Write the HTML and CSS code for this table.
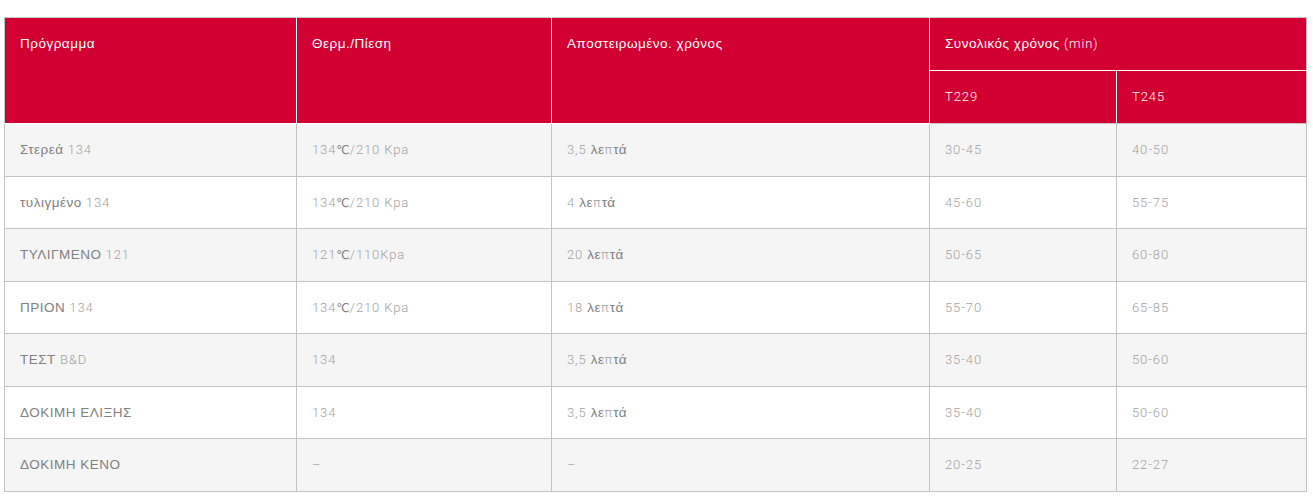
FILE: index.html
```html
<!DOCTYPE html>
<html lang="el">
<head>
<meta charset="utf-8">
<title>Προγράμματα</title>
<link rel="stylesheet" href="styles.css">
</head>
<body>
<div class="wrap">
<table class="prog">
  <colgroup>
    <col class="c1"><col class="c2"><col class="c3"><col class="c4"><col class="c5">
  </colgroup>
  <thead>
    <tr>
      <th rowspan="2" class="first"><span class="gr">Πρόγραμμα</span></th>
      <th rowspan="2"><span class="gr">Θερμ./Πίεση</span></th>
      <th rowspan="2"><span class="gr">Αποστειρωμένο. χρόνος</span></th>
      <th colspan="2" class="last"><span class="gr">Συνολικός χρόνος</span> (min)</th>
    </tr>
    <tr>
      <th>T229</th>
      <th class="last">T245</th>
    </tr>
  </thead>
  <tbody>
    <tr class="alt">
      <td><span class="gr">Στερεά</span> 134</td>
      <td>134<span class="deg">℃</span>/210 Kpa</td>
      <td>3,5 <span class="gr">λε</span>π<span class="gr">τά</span></td>
      <td>30-45</td>
      <td>40-50</td>
    </tr>
    <tr>
      <td><span class="gr">τυλιγμένο</span> 134</td>
      <td>134<span class="deg">℃</span>/210 Kpa</td>
      <td>4 <span class="gr">λε</span>π<span class="gr">τά</span></td>
      <td>45-60</td>
      <td>55-75</td>
    </tr>
    <tr class="alt">
      <td><span class="gr">ΤΥΛΙΓΜΕΝΟ</span> 121</td>
      <td>121<span class="deg">℃</span>/110Kpa</td>
      <td>20 <span class="gr">λε</span>π<span class="gr">τά</span></td>
      <td>50-65</td>
      <td>60-80</td>
    </tr>
    <tr>
      <td><span class="gr">ΠΡΙΟΝ</span> 134</td>
      <td>134<span class="deg">℃</span>/210 Kpa</td>
      <td>18 <span class="gr">λε</span>π<span class="gr">τά</span></td>
      <td>55-70</td>
      <td>65-85</td>
    </tr>
    <tr class="alt">
      <td><span class="gr">ΤΕΣΤ</span> B&amp;D</td>
      <td>134</td>
      <td>3,5 <span class="gr">λε</span>π<span class="gr">τά</span></td>
      <td>35-40</td>
      <td>50-60</td>
    </tr>
    <tr>
      <td><span class="gr">ΔΟΚΙΜΗ ΕΛΙΞΗΣ</span></td>
      <td>134</td>
      <td>3,5 <span class="gr">λε</span>π<span class="gr">τά</span></td>
      <td>35-40</td>
      <td>50-60</td>
    </tr>
    <tr class="alt">
      <td><span class="gr">ΔΟΚΙΜΗ ΚΕΝΟ</span></td>
      <td>–</td>
      <td>–</td>
      <td>20-25</td>
      <td>22-27</td>
    </tr>
  </tbody>
</table>
</div>
</body>
</html>
```

FILE: styles.css
```css
html, body {
  margin: 0;
  padding: 0;
  background: #ffffff;
}

.wrap {
  padding: 17px 0 0 4px;
}

.prog {
  border-collapse: collapse;
  table-layout: fixed;
  width: 1302px;
  border: 1px solid #c4c4c4;
  font-family: Roboto, "Liberation Sans", sans-serif;
  font-weight: 300;
  font-size: 13px;
  letter-spacing: 0.9px;
}

.c1 { width: 292px; }
.c2 { width: 255px; }
.c3 { width: 378px; }
.c4 { width: 187px; }
.c5 { width: 190px; }

.gr {
  font-family: "Liberation Sans", Arial, sans-serif;
  font-weight: 400;
  font-size: 13.5px;
  letter-spacing: 0.5px;
}

.deg {
  font-family: "DejaVu Sans", "Liberation Sans", sans-serif;
  font-weight: 400;
  font-size: 12px;
  line-height: 10px;
  letter-spacing: 0;
  color: #808080;
}

.prog th {
  background: #d20032;
  color: #ffffff;
  text-align: left;
  vertical-align: top;
  font-weight: 300;
  padding: 17px 15px 17px 15px;
  line-height: 18px;
  border: 1px solid #ffffff;
}

.prog thead tr:first-child th {
  border-top: 1px solid #c4c4c4;
}

.prog th.first {
  border-left: 1px solid #c4c4c4;
}

.prog th.last {
  border-right: 1px solid #c4c4c4;
}

.prog thead tr:last-child th {
  border-bottom: 1px solid #c4c4c4;
}

.prog td {
  color: #a2a2a2;
  padding: 17px 15px;
  line-height: 17.5px;
  border: 1px solid #c4c4c4;
  vertical-align: middle;
  background: #ffffff;
}

.prog td .gr {
  color: #808080;
}

.prog tr.alt td {
  background: #f5f5f5;
}
```
